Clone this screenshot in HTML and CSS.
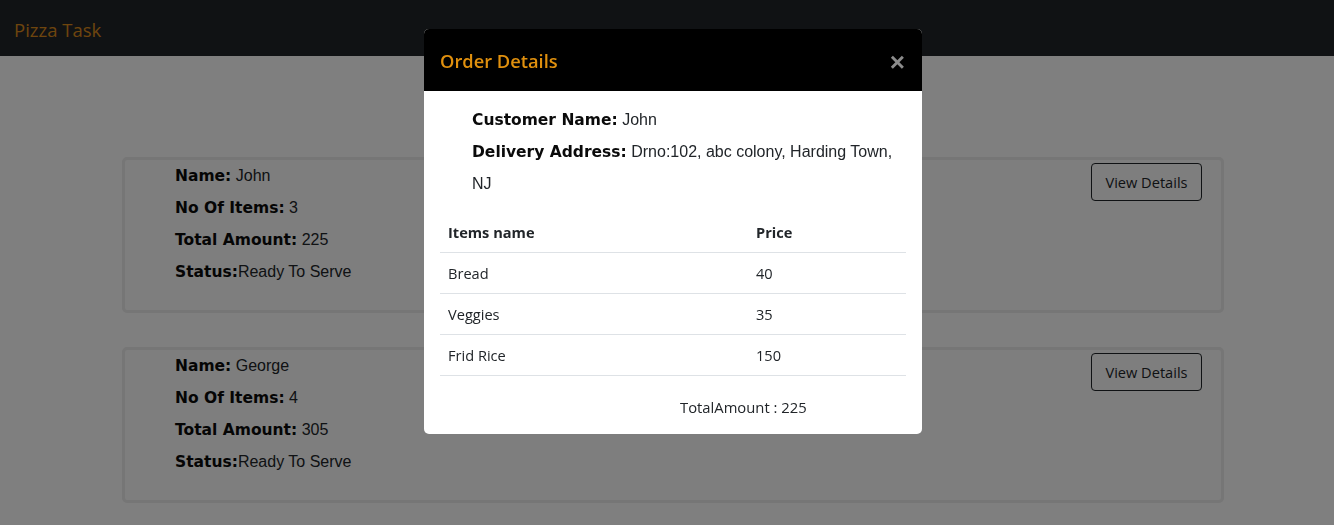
FILE: index.html
```html
<!DOCTYPE html>
<html lang="en">
<head>
<meta charset="utf-8">
<title>Pizza Task</title>
<link rel="stylesheet" href="styles.css">
</head>
<body>
<nav class="navbar">
  <span class="brand">Pizza Task</span>
</nav>
<main class="orders">
  <section class="card">
    <div class="info">
      <div class="line"><b class="label">Name:</b> John</div>
      <div class="line"><b class="label">No Of Items:</b> 3</div>
      <div class="line"><b class="label">Total Amount:</b> 225</div>
      <div class="line"><b class="label">Status:</b>Ready To Serve</div>
    </div>
    <button class="btn">View Details</button>
  </section>
  <section class="card">
    <div class="info">
      <div class="line"><b class="label">Name:</b> George</div>
      <div class="line"><b class="label">No Of Items:</b> 4</div>
      <div class="line"><b class="label">Total Amount:</b> 305</div>
      <div class="line"><b class="label">Status:</b>Ready To Serve</div>
    </div>
    <button class="btn">View Details</button>
  </section>
</main>
<div class="backdrop"></div>
<div class="modal">
  <div class="modal-header">
    <h5 class="modal-title">Order Details</h5>
    <span class="close">&times;</span>
  </div>
  <div class="modal-body">
    <div class="customer">
      <div class="line"><b class="label">Customer Name:</b> John</div>
      <div class="line"><b class="label">Delivery Address:</b> Drno:102, abc colony, Harding Town, NJ</div>
    </div>
    <table class="items">
      <thead>
        <tr><th class="col-name">Items name</th><th>Price</th></tr>
      </thead>
      <tbody>
        <tr><td>Bread</td><td>40</td></tr>
        <tr><td>Veggies</td><td>35</td></tr>
        <tr><td>Frid Rice</td><td>150</td></tr>
      </tbody>
    </table>
    <div class="total">TotalAmount : 225</div>
  </div>
</div>
</body>
</html>
```
FILE: styles.css
```css
* { box-sizing: border-box; }
html, body { margin: 0; padding: 0; }
body {
  background: #fff;
  color: #212529;
  font-family: "Liberation Sans", Arial, sans-serif;
  font-size: 16px;
  height: 525px;
  overflow: hidden;
}
.navbar {
  height: 56px;
  background: #212529;
  display: flex;
  align-items: center;
  padding: 0 14px;
}
.brand {
  font-family: "Open Sans", sans-serif;
  font-size: 18.5px;
  color: #dc8a1c;
  position: relative;
  top: 1px;
}
.orders {
  margin: 101px 0 0 122px;
  width: 1102px;
}
.card {
  display: flex;
  justify-content: space-between;
  align-items: flex-start;
  border: 3px solid #ececec;
  border-radius: 5px;
  background: #fcfcfc;
  padding: 0 19px 22px 50px;
  margin-bottom: 34px;
}
.line { line-height: 32px; }
.label {
  font-family: "DejaVu Sans", sans-serif;
  font-weight: bold;
  font-size: 15.5px;
  color: #0a0a0a;
}
.btn {
  margin-top: 3px;
  font-family: "Open Sans", sans-serif;
  font-size: 14.6px;
  line-height: 24px;
  padding: 6px 12px;
  width: 111px;
  color: #212529;
  background: transparent;
  border: 1px solid #212529;
  border-radius: 4px;
}
.backdrop {
  position: fixed;
  inset: 0;
  background: rgba(0, 0, 0, 0.5);
}
.modal {
  position: fixed;
  top: 29px;
  left: 424px;
  width: 498px;
  height: 405px;
  background: #fff;
  border-radius: 5px;
  overflow: hidden;
}
.modal-header {
  height: 62px;
  background: #000;
  display: flex;
  align-items: center;
  justify-content: space-between;
  padding: 0 17px 0 16px;
}
.modal-title {
  margin: 0;
  font-family: "Open Sans", sans-serif;
  font-weight: 600;
  font-size: 18.3px;
  color: #e0900e;
}
.close {
  font-family: "Liberation Sans", Arial, sans-serif;
  font-weight: bold;
  font-size: 26px;
  color: #8c8c8c;
  position: relative;
  top: 2px;
}
.modal-body {
  padding: 13px 16px 0 16px;
}
.customer {
  padding-left: 32px;
  padding-right: 8px;
  margin-bottom: 12px;
}
.items {
  width: 100%;
  border-collapse: collapse;
  font-family: "Open Sans", sans-serif;
  font-size: 14.6px;
  color: #212529;
}
.items th, .items td {
  text-align: left;
  padding: 8px;
  line-height: 24px;
  border-bottom: 1px solid #dee2e6;
}
.items th { font-weight: bold; }
.col-name { width: 308px; }
.total {
  font-family: "Open Sans", sans-serif;
  font-size: 14.8px;
  line-height: 24px;
  margin-top: 19px;
  padding-left: 240px;
  color: #212529;
}
```
